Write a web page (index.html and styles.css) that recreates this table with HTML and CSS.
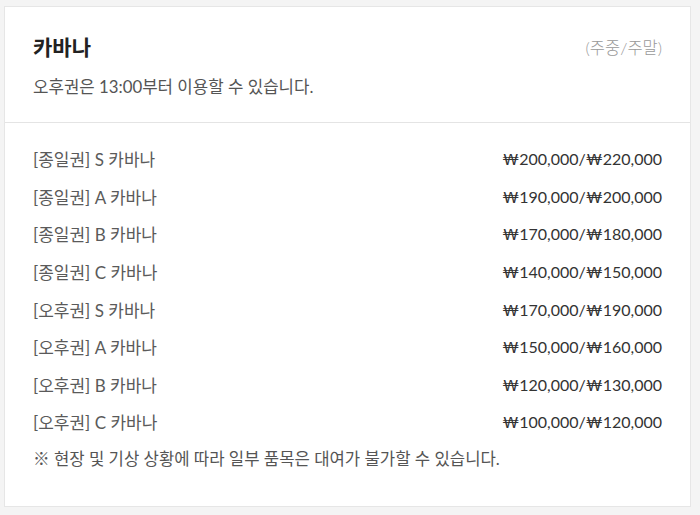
FILE: index.html
```html
<!DOCTYPE html>
<html lang="ko">
<head>
<meta charset="utf-8">
<link rel="stylesheet" href="styles.css">
</head>
<body>
<div class="card">
  <div class="card-head">
    <div class="title-row">
      <h2 class="title">카바나</h2>
      <span class="unit">(주중/주말)</span>
    </div>
    <p class="sub">오후권은 13:00부터 이용할 수 있습니다.</p>
  </div>
  <div class="card-body">
    <div class="row"><span class="name">[종일권] S 카바나</span><span class="price">₩200,000/₩220,000</span></div>
    <div class="row"><span class="name">[종일권] A 카바나</span><span class="price">₩190,000/₩200,000</span></div>
    <div class="row"><span class="name">[종일권] B 카바나</span><span class="price">₩170,000/₩180,000</span></div>
    <div class="row"><span class="name">[종일권] C 카바나</span><span class="price">₩140,000/₩150,000</span></div>
    <div class="row"><span class="name">[오후권] S 카바나</span><span class="price">₩170,000/₩190,000</span></div>
    <div class="row"><span class="name">[오후권] A 카바나</span><span class="price">₩150,000/₩160,000</span></div>
    <div class="row"><span class="name">[오후권] B 카바나</span><span class="price">₩120,000/₩130,000</span></div>
    <div class="row"><span class="name">[오후권] C 카바나</span><span class="price">₩100,000/₩120,000</span></div>
    <p class="note">※ 현장 및 기상 상황에 따라 일부 품목은 대여가 불가할 수 있습니다.</p>
  </div>
</div>
</body>
</html>
```

FILE: styles.css
```css
html, body {
  margin: 0;
  padding: 0;
  background: #f4f4f4;
}
body {
  padding: 6px 9px 8px 4px;
  font-family: "Lato", "Noto Sans CJK KR", sans-serif;
  color: #555;
}
.card {
  background: #fff;
  border: 1px solid #e6e6e6;
  box-sizing: border-box;
  height: 501px;
}
.card-head {
  padding: 22px 28px 0 28px;
  height: 116px;
  box-sizing: border-box;
  border-bottom: 1px solid #e4e4e4;
}
.title-row {
  display: flex;
  justify-content: space-between;
  align-items: center;
  height: 36px;
}
.title {
  margin: 0;
  font-size: 21px;
  font-weight: 700;
  color: #222;
  line-height: 36px;
}
.unit {
  font-size: 16.5px;
  color: #999;
  font-weight: 300;
}
.sub {
  margin: 5px 0 0 0;
  font-size: 16.8px;
  line-height: 34px;
  color: #555;
}
.card-body {
  padding: 17px 28px 0 28px;
}
.row {
  display: flex;
  justify-content: space-between;
  align-items: center;
  height: 37.6px;
}
.name {
  font-size: 17px;
  color: #5a5a5a;
}
.price {
  font-size: 16px;
  color: #333;
}
.note {
  margin: 0;
  height: 37.6px;
  line-height: 37.6px;
  font-size: 16.7px;
  color: #555;
}
```
